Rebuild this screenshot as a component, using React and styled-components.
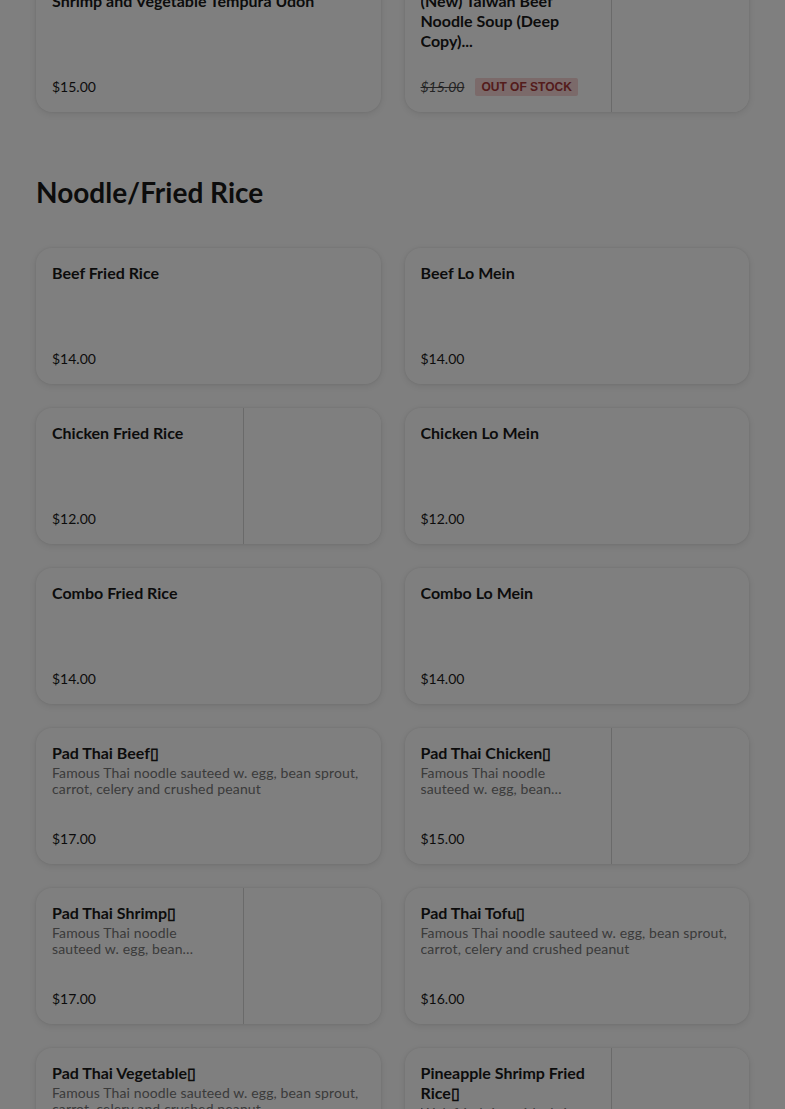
import React from "react";
import styled, { createGlobalStyle } from "styled-components";

const GlobalStyle = createGlobalStyle`
  html, body {
    margin: 0;
    padding: 0;
    background: #fff;
  }
  body {
    font-family: Lato, "Liberation Sans", sans-serif;
    color: #191919;
    overflow: hidden;
  }
`;

const Page = styled.div`
  padding: 0 36px;
  margin-top: -24px;
`;

const Section = styled.section`
  & + & {
    margin-top: 62px;
  }
`;

const SectionTitle = styled.h2`
  margin: 0 0 38px;
  font-size: 28px;
  line-height: 36px;
  font-weight: 700;
  color: #191919;
`;

const Grid = styled.div`
  display: grid;
  grid-template-columns: 1fr 1fr;
  gap: 24px;
`;

const Card = styled.div`
  display: flex;
  height: 136px;
  background: #fff;
  border-radius: 16px;
  overflow: hidden;
  box-shadow: 0 0 3px rgba(0, 0, 0, 0.08), 0 2px 8px rgba(0, 0, 0, 0.1);
`;

const Body = styled.div`
  flex: 1;
  min-width: 0;
  padding: 15px 16px 16px;
  display: flex;
  flex-direction: column;
`;

const Title = styled.div`
  font-size: 16px;
  line-height: 20px;
  font-weight: 700;
  color: #191919;
  display: -webkit-box;
  -webkit-box-orient: vertical;
  -webkit-line-clamp: ${(p) => p.$lines || 2};
  overflow: hidden;
`;

const Desc = styled.div`
  margin-top: 2px;
  font-size: 14px;
  line-height: 16px;
  letter-spacing: 0.13px;
  color: #767676;
  display: -webkit-box;
  -webkit-box-orient: vertical;
  -webkit-line-clamp: 2;
  overflow: hidden;
`;

const PriceRow = styled.div`
  margin-top: auto;
  display: flex;
  align-items: center;
  gap: 11px;
`;

const Price = styled.span`
  font-size: 14px;
  line-height: 18px;
  color: #191919;
  ${(p) =>
    p.$struck &&
    `
    font-style: italic;
    text-decoration: line-through;
    color: #494949;
  `}
`;

const Badge = styled.span`
  font-family: "Liberation Sans", Arial, sans-serif;
  font-weight: 700;
  font-size: 12px;
  line-height: 18px;
  padding: 0 6px;
  border-radius: 2px;
  background: #f6d4d4;
  color: #a83838;
`;

const Photo = styled.div`
  width: 137px;
  flex: none;
  border-left: 1px solid #d4d4d4;
  background: #fff;
`;

const Overlay = styled.div`
  position: fixed;
  inset: 0;
  background: rgba(0, 0, 0, 0.5);
  pointer-events: none;
`;

const PEPPER = "\u25AF";
const PAD_DESC =
  "Famous Thai noodle sauteed w. egg, bean sprout, carrot, celery and crushed peanut";

const sections = [
  {
    items: [
      { name: "Shrimp and Vegetable Tempura Udon", price: "$15.00" },
      {
        name: "(New) Taiwan Beef Noodle Soup (Deep Copy)...",
        price: "$15.00",
        photo: true,
        soldOut: true,
        lines: 3,
      },
    ],
  },
  {
    title: "Noodle/Fried Rice",
    items: [
      { name: "Beef Fried Rice", price: "$14.00" },
      { name: "Beef Lo Mein", price: "$14.00" },
      { name: "Chicken Fried Rice", price: "$12.00", photo: true },
      { name: "Chicken Lo Mein", price: "$12.00" },
      { name: "Combo Fried Rice", price: "$14.00" },
      { name: "Combo Lo Mein", price: "$14.00" },
      { name: `Pad Thai Beef${PEPPER}`, desc: PAD_DESC, price: "$17.00" },
      { name: `Pad Thai Chicken${PEPPER}`, desc: PAD_DESC, price: "$15.00", photo: true },
      { name: `Pad Thai Shrimp${PEPPER}`, desc: PAD_DESC, price: "$17.00", photo: true },
      { name: `Pad Thai Tofu${PEPPER}`, desc: PAD_DESC, price: "$16.00" },
      { name: `Pad Thai Vegetable${PEPPER}`, desc: PAD_DESC, price: "$15.00" },
      {
        name: `Pineapple Shrimp Fried Rice${PEPPER}`,
        desc: "Wok fried rice with shrimp, pineapple, egg, onion and cashew nut",
        price: "$16.00",
        photo: true,
      },
    ],
  },
];

const MenuCard = ({ item }) => (
  <Card>
    <Body>
      <Title $lines={item.lines}>{item.name}</Title>
      {item.desc && <Desc>{item.desc}</Desc>}
      <PriceRow>
        <Price $struck={item.soldOut}>{item.price}</Price>
        {item.soldOut && <Badge>OUT OF STOCK</Badge>}
      </PriceRow>
    </Body>
    {item.photo && <Photo />}
  </Card>
);

export default function App() {
  return (
    <>
      <GlobalStyle />
      <Page>
        {sections.map((s, i) => (
          <Section key={i}>
            {s.title && <SectionTitle>{s.title}</SectionTitle>}
            <Grid>
              {s.items.map((it) => (
                <MenuCard key={it.name} item={it} />
              ))}
            </Grid>
          </Section>
        ))}
      </Page>
      <Overlay />
    </>
  );
}
